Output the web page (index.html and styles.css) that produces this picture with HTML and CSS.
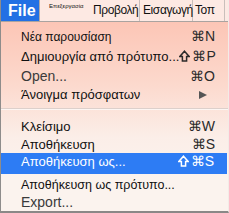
FILE: index.html
```html
<!DOCTYPE html>
<html lang="el">
<head>
    <meta charset="UTF-8">
    <meta name="viewport" content="width=device-width, initial-scale=1.0">
    <title>File menu</title>
    <link rel="stylesheet" href="styles.css">
</head>
<body>
    <div class="window">
        <div class="menubar">
            <div class="mb-file">File</div>
            <div class="mb-edit">Επεξεργασία</div>
            <div class="mb-item mb-view">Προβολή</div>
            <div class="mb-item mb-insert">Εισαγωγή</div>
            <div class="mb-item mb-tools">Τοπ</div>
        </div>
        <div class="menu">
            <div class="row r-new"><span class="label">Νέα παρουσίαση</span><span class="keys">⌘N</span></div>
            <div class="row r-tpl"><span class="label">Δημιουργία από πρότυπο...</span><span class="keys"><svg class="shift" viewBox="0 0 11 12"><path d="M5.5 1.2 L10.2 6.4 H7.6 V11 H3.4 V6.4 H0.8 Z"/></svg>⌘P</span></div>
            <div class="row r-open"><span class="label gray">Open...</span><span class="keys">⌘O</span></div>
            <div class="row r-recent"><span class="label">Άνοιγμα πρόσφατων</span><span class="arrow"></span></div>
            <div class="separator"></div>
            <div class="row r-close"><span class="label">Κλείσιμο</span><span class="keys">⌘W</span></div>
            <div class="row r-save"><span class="label">Αποθήκευση</span><span class="keys">⌘S</span></div>
            <div class="row r-saveas active"><span class="label">Αποθήκευση ως...</span><span class="keys"><svg class="shift" viewBox="0 0 11 12"><path d="M5.5 1.2 L10.2 6.4 H7.6 V11 H3.4 V6.4 H0.8 Z"/></svg>⌘S</span></div>
            <div class="row r-savetpl"><span class="label">Αποθήκευση ως πρότυπο...</span></div>
            <div class="row r-export"><span class="label gray">Export...</span></div>
        </div>
    </div>
</body>
</html>
```

FILE: styles.css
```css
body {
    margin: 0;
    font-family: 'Liberation Sans', Arial, sans-serif;
    color: #111;
}

.window {
    width: 229px;
    height: 213px;
    box-sizing: border-box;
    border-left: 1px solid #8e8c8b;
    border-bottom: 2px solid #8a8887;
    border-right: 1px solid #f3ebe7;
    overflow: hidden;
    background: linear-gradient(#fcc4b4 8%, #fcd9cd 40%, #fbeee8 65%, #fbf3ee 85%);
}

.menubar {
    display: flex;
    height: 21px;
    background-color: #fde9e3;
    border-bottom: 1px solid #aaa3a0;
    margin-left: -1px;
    white-space: nowrap;
}

.mb-file {
    width: 40px;
    flex: none;
    background-color: #2270e4;
    color: #fff;
    font-weight: bold;
    font-size: 16px;
    line-height: 21px;
    padding-left: 8px;
    box-sizing: border-box;
    border-right: 1px solid #b4aaa6;
}

.mb-edit {
    width: 52px;
    flex: none;
    font-size: 6px;
    line-height: 13px;
    padding-left: 9px;
    box-sizing: border-box;
}

.mb-item {
    flex: none;
    font-size: 12px;
    letter-spacing: -0.4px;
    line-height: 21px;
    box-sizing: border-box;
    border-right: 1px solid #c9bfbb;
}

.mb-view {
    width: 48px;
    padding-left: 1px;
}

.mb-insert {
    width: 53px;
    padding-left: 3px;
}

.mb-tools {
    width: 32px;
    padding-left: 2px;
}

.menu {
    padding-top: 5px;
}

.row {
    display: flex;
    justify-content: space-between;
    align-items: baseline;
    padding: 0 13px 0 20px;
    white-space: nowrap;
}

.r-new { font-size: 12px; line-height: 19px; }
.r-tpl { font-size: 13px; line-height: 19px; }
.r-open { font-size: 14px; line-height: 20px; }
.r-recent { font-size: 13px; line-height: 18px; align-items: center; }
.r-close { font-size: 13px; line-height: 18px; }
.r-save { font-size: 13px; line-height: 17px; }
.r-saveas { font-size: 13px; line-height: 16px; padding-bottom: 4px; }
.r-savetpl { font-size: 12.5px; line-height: 18px; padding-top: 2px; }
.r-export { font-size: 14px; line-height: 16px; }

.gray {
    color: #3a3a3a;
}

.keys {
    font-size: 14px;
    color: #2a2a2a;
}

.keys .shift {
    width: 11px;
    height: 12px;
    margin-right: 2px;
    vertical-align: -1px;
    fill: none;
    stroke: currentColor;
    stroke-width: 1.5;
    stroke-linejoin: miter;
}

.arrow {
    width: 0;
    height: 0;
    margin-right: 8px;
    border-top: 4.5px solid transparent;
    border-bottom: 4.5px solid transparent;
    border-left: 8px solid #555;
}

.separator {
    height: 1px;
    margin: 4px 0 7px;
    background-color: #ddd0cb;
    border-bottom: 1px solid #fdf6f3;
}

.active {
    background-color: #2d7cf4;
    color: #fff;
    margin-right: 1px;
}

.active .keys {
    color: #fff;
}
```
